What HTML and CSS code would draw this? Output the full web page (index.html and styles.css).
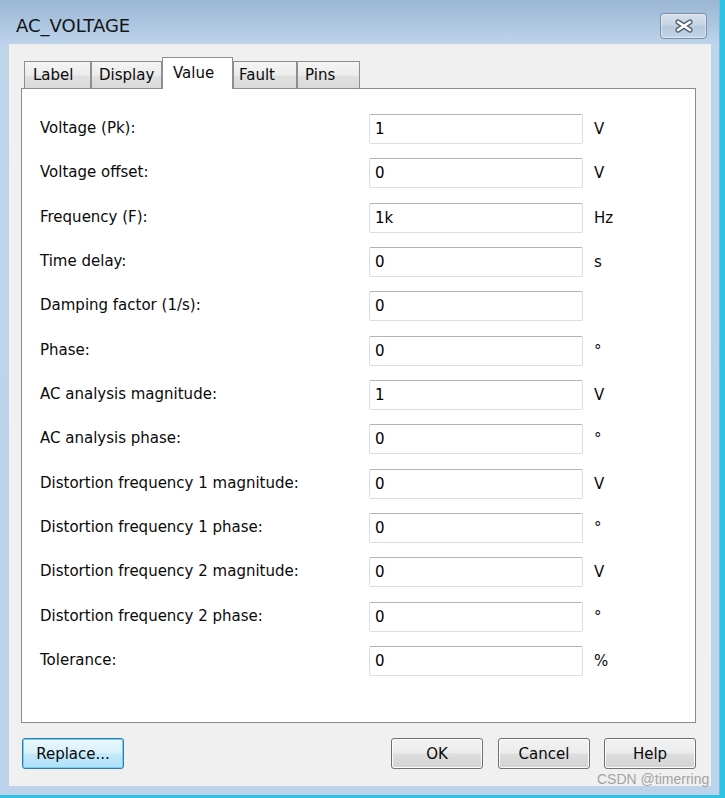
FILE: index.html
```html
<!DOCTYPE html>
<html>
<head>
<meta charset="utf-8">
<title>AC_VOLTAGE</title>
<link rel="stylesheet" href="styles.css">
</head>
<body>
<div class="screen">
  <div class="window">
    <div class="titlebar">
      <span class="title">AC_VOLTAGE</span>
      <button class="close" aria-label="Close">
        <svg width="20" height="14" viewBox="0 0 20 14">
          <path d="M4 3 L16 11 M16 3 L4 11" stroke="#56606e" stroke-width="5.2" stroke-linecap="round" fill="none"/>
          <path d="M4 3 L16 11 M16 3 L4 11" stroke="#ffffff" stroke-width="2.6" stroke-linecap="round" fill="none"/>
        </svg>
      </button>
    </div>
    <div class="client">
      <div class="tabs">
        <div class="tab tab-label">Label</div>
        <div class="tab tab-display">Display</div>
        <div class="tab tab-value active">Value</div>
        <div class="tab tab-fault">Fault</div>
        <div class="tab tab-pins">Pins</div>
      </div>
      <div class="panel">
        <div class="form">
          <span class="lbl">Voltage (Pk):</span><div class="field">1</div><span class="unit">V</span>
          <span class="lbl">Voltage offset:</span><div class="field">0</div><span class="unit">V</span>
          <span class="lbl">Frequency (F):</span><div class="field">1k</div><span class="unit">Hz</span>
          <span class="lbl">Time delay:</span><div class="field">0</div><span class="unit">s</span>
          <span class="lbl">Damping factor (1/s):</span><div class="field">0</div><span class="unit"></span>
          <span class="lbl">Phase:</span><div class="field">0</div><span class="unit">°</span>
          <span class="lbl">AC analysis magnitude:</span><div class="field">1</div><span class="unit">V</span>
          <span class="lbl">AC analysis phase:</span><div class="field">0</div><span class="unit">°</span>
          <span class="lbl">Distortion frequency 1 magnitude:</span><div class="field">0</div><span class="unit">V</span>
          <span class="lbl">Distortion frequency 1 phase:</span><div class="field">0</div><span class="unit">°</span>
          <span class="lbl">Distortion frequency 2 magnitude:</span><div class="field">0</div><span class="unit">V</span>
          <span class="lbl">Distortion frequency 2 phase:</span><div class="field">0</div><span class="unit">°</span>
          <span class="lbl">Tolerance:</span><div class="field">0</div><span class="unit">%</span>
        </div>
      </div>
      <div class="buttons">
        <button class="btn btn-default btn-replace">Replace...</button>
        <button class="btn btn-ok">OK</button>
        <button class="btn btn-cancel">Cancel</button>
        <button class="btn btn-help">Help</button>
      </div>
    </div>
  </div>
  <div class="watermark">CSDN @timerring</div>
</div>
</body>
</html>
```
FILE: styles.css
```css
* { box-sizing: border-box; }
html, body { margin: 0; padding: 0; }
body { background: #2ec3e3; }

.screen {
  position: relative;
  width: 725px;
  height: 798px;
  overflow: hidden;
  background: #2ec3e3;
  font-family: "DejaVu Sans", Verdana, sans-serif;
  font-size: 15px;
  color: #0a0a0a;
}

.window {
  width: 720px;
  height: 795px;
  display: flex;
  flex-direction: column;
  padding: 0 8px 9px 9px;
  background: linear-gradient(180deg, #9bb6d3 0px, #abc5df 22px, #bdd4eb 44px, #bcd3eb 100%);
  border-right: 1px solid #8fb0d2;
}

.titlebar {
  height: 44px;
  flex: none;
  display: flex;
  align-items: flex-start;
}
.title {
  font-size: 18px;
  line-height: 22px;
  margin-top: 15px;
  margin-left: 7px;
  color: #141414;
}
.close {
  margin: 13px 4px 0 auto;
  width: 47px;
  height: 26px;
  padding: 0;
  border: 1px solid #7d8ea6;
  border-radius: 4px;
  background: linear-gradient(180deg, #d5e0ec 0%, #c4d3e4 48%, #b6c8dc 52%, #c3d5e8 100%);
  box-shadow: inset 0 0 0 1px rgba(255,255,255,0.45);
  display: flex;
  align-items: center;
  justify-content: center;
}

.client {
  flex: 1;
  background: #f0f0f0;
  padding: 13px 15px 0 12px;
  display: flex;
  flex-direction: column;
}

.tabs {
  height: 31px;
  flex: none;
  display: flex;
  align-items: flex-end;
  padding-left: 3px;
  position: relative;
  z-index: 1;
}
.tab {
  height: 27px;
  border: 1px solid #8c8e94;
  border-bottom: none;
  background: linear-gradient(180deg, #f4f4f4 0%, #ececec 50%, #e0e0e0 55%, #dadada 100%);
  line-height: 26px;
  padding-left: 7px;
  white-space: nowrap;
}
.tab.active {
  height: 32px;
  margin-bottom: -1px;
  background: #ffffff;
  line-height: 30px;
  padding-left: 10px;
}
.tab-label { width: 67px; padding-left: 8px; }
.tab-display { width: 71px; padding-left: 7px; }
.tab-value { width: 71px; }
.tab-fault { width: 64px; padding-left: 5px; }
.tab-pins { width: 63px; padding-left: 7px; }

.panel {
  height: 635px;
  flex: none;
  border: 1px solid #898c95;
  background: #ffffff;
  padding: 25px 0 0 18px;
}

.form {
  display: grid;
  grid-template-columns: 329px 214px auto;
  grid-auto-rows: 30px;
  row-gap: 14.33px;
  align-items: center;
}
.lbl {
  line-height: 18px;
  margin-top: -2px;
}
.field {
  height: 30px;
  border: 1px solid #dadde3;
  border-top-color: #b0b3b9;
  border-radius: 2px;
  padding-left: 5px;
  line-height: 28px;
  color: #000;
}
.unit {
  padding-left: 11px;
  line-height: 18px;
}

.buttons {
  margin-top: 15px;
  height: 31px;
  flex: none;
  display: flex;
}
.btn {
  height: 31px;
  width: 92px;
  padding: 0;
  font-family: "DejaVu Sans", Verdana, sans-serif;
  font-size: 15px;
  color: #0a0a0a;
  border: 1px solid #707070;
  border-radius: 3px;
  background: linear-gradient(180deg, #f3f3f3 0%, #ebebeb 48%, #dedede 52%, #d2d2d2 100%);
  box-shadow: inset 0 0 0 1px #fbfbfb;
}
.btn-default {
  border-color: #2f79ad;
  background: linear-gradient(180deg, #eaf7fd 0%, #d8f0fc 48%, #c3e8fb 52%, #b0e0f8 100%);
  box-shadow: inset 0 0 0 1px #6fd0f4;
}
.btn-replace { width: 102px; margin-left: 1px; }
.btn-ok { margin-left: auto; }
.btn-cancel { margin-left: 15px; }
.btn-help { margin-left: 14px; }

.watermark {
  position: absolute;
  left: 597px;
  top: 771px;
  font-family: "Liberation Sans", Arial, sans-serif;
  font-size: 14px;
  line-height: 16px;
  color: #a3a3a3;
  white-space: nowrap;
}
```
